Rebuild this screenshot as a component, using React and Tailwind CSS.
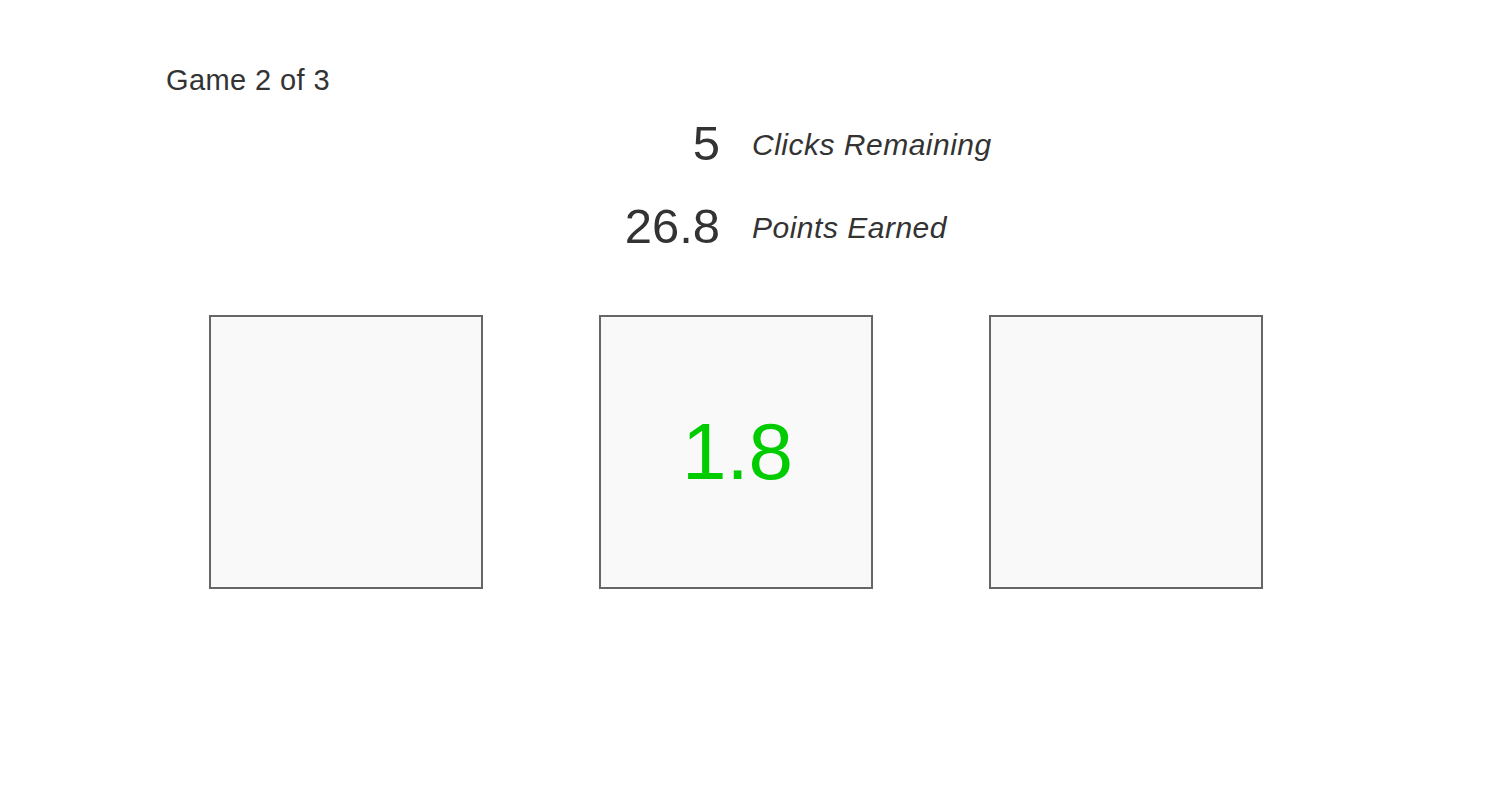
const stats = [
  { value: '5', label: 'Clicks Remaining' },
  { value: '26.8', label: 'Points Earned' },
];

const boxes = [null, '1.8', null];

export default function App() {
  return (
    <div className="min-h-screen bg-white text-[#333333] font-['Liberation_Sans',Arial,sans-serif]">
      <div className="w-[1140px] ml-[166px] pt-[64px]">
        <div className="text-[29px] leading-[normal] tracking-[0.4px]">Game 2 of 3</div>

        <div className="mt-[18px] flex flex-col gap-[27px]">
          {stats.map((s) => (
            <div key={s.label} className="grid grid-cols-2 gap-x-8 items-center">
              <div className="text-right text-[49px] leading-[normal]">{s.value}</div>
              <div className="pt-[4px] text-[30px] italic leading-[normal] tracking-[0.5px]">{s.label}</div>
            </div>
          ))}
        </div>

        <div className="mt-[61px] flex justify-center gap-[116px]">
          {boxes.map((v, i) => (
            <div
              key={i}
              className="w-[274px] h-[274px] border-2 border-[#666666] bg-[#f9f9f9] flex items-center justify-center"
            >
              {v && <span className="text-[80px] leading-[normal] text-[#00cc00] pl-[3px]">{v}</span>}
            </div>
          ))}
        </div>
      </div>
    </div>
  );
}
